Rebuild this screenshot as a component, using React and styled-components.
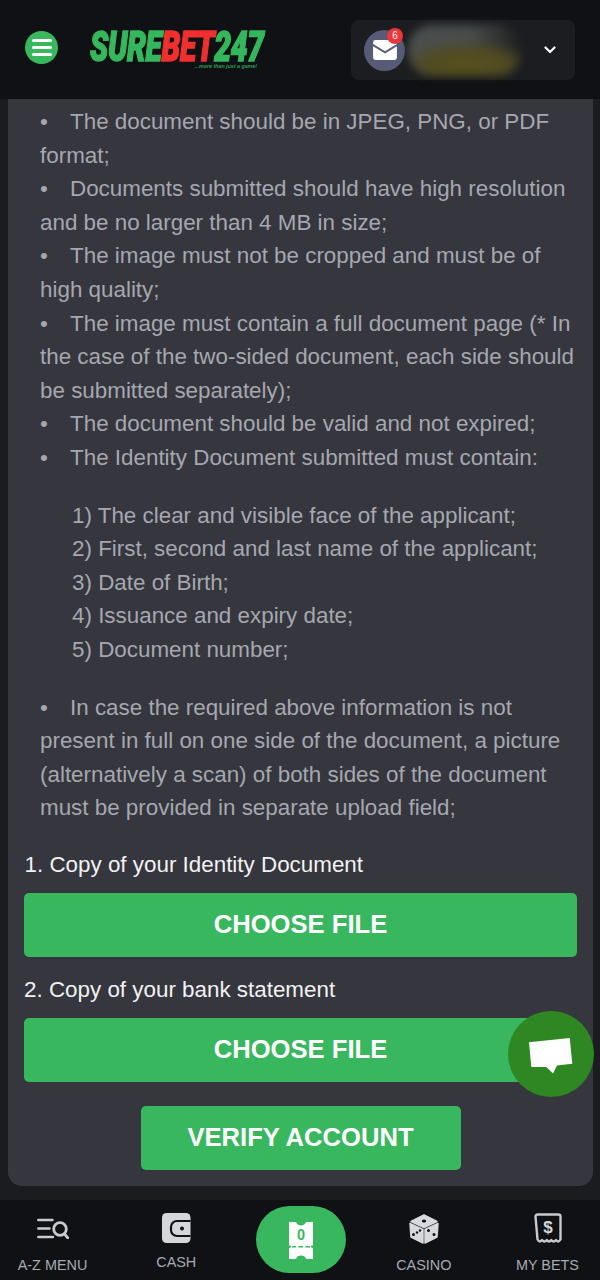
import React from 'react';
import styled, { createGlobalStyle } from 'styled-components';

const GlobalStyle = createGlobalStyle`
  html, body { margin: 0; padding: 0; background: #1b1c20; }
  body { font-family: "Liberation Sans", Arial, sans-serif; }
  * { box-sizing: border-box; }
`;

const Page = styled.div`
  position: relative;
  width: 600px;
  height: 1280px;
  overflow: hidden;
  display: flex;
  flex-direction: column;
  background: #1b1c20;
`;

const Header = styled.header`
  height: 99px;
  flex: none;
  display: flex;
  align-items: center;
  background: #0f1114;
  padding: 0 25px 0 25px;
`;

const MenuButton = styled.button`
  width: 33px;
  height: 33px;
  margin-top: -4px;
  border: 0;
  padding: 0;
  border-radius: 50%;
  background: #39b75f;
  display: flex;
  flex-direction: column;
  align-items: center;
  justify-content: center;
  gap: 4px;
`;

const MenuLine = styled.span`
  width: 20px;
  height: 3px;
  border-radius: 2px;
  background: #fff;
`;

const Logo = styled.div`
  margin-left: 32px;
  margin-top: -1px;
  width: 178px;
  display: flex;
  flex-direction: column;
`;

const LogoWord = styled.div`
  font-family: "Roboto", "Liberation Sans", sans-serif;
  font-weight: 900;
  font-style: italic;
  font-size: 42px;
  line-height: 36px;
  letter-spacing: -0.5px;
  color: #35b75c;
  -webkit-text-stroke: 1.5px currentColor;
  white-space: nowrap;
  transform: scaleX(0.715);
  transform-origin: left center;
`;

const LogoRed = styled.span`
  color: #f0302f;
`;

const LogoTag = styled.div`
  align-self: flex-end;
  margin: -2px 11px 0 0;
  font-size: 5.3px;
  line-height: 6px;
  font-weight: 700;
  font-style: italic;
  color: #2f9e50;
`;

const UserBox = styled.div`
  margin-left: auto;
  width: 224px;
  height: 60px;
  margin-top: 1px;
  border-radius: 8px;
  background: #1b1d20;
  display: flex;
  align-items: center;
  padding-left: 13px;
`;

const MailCircle = styled.div`
  position: relative;
  width: 41px;
  height: 41px;
  flex: none;
  border-radius: 50%;
  background: #565c78;
  display: flex;
  align-items: center;
  justify-content: center;
`;

const Badge = styled.span`
  position: absolute;
  top: -2px;
  right: 2px;
  width: 16px;
  height: 16px;
  border-radius: 50%;
  background: #ef3537;
  color: #fff;
  font-size: 10px;
  line-height: 16px;
  text-align: center;
`;

const Blur = styled.div`
  width: 114px;
  height: 51px;
  flex: none;
  margin-left: 3px;
  border-radius: 24px;
  background:
    radial-gradient(ellipse 62% 48% at 52% 78%, #565020 0%, #514b20 55%, rgba(81, 75, 32, 0) 100%),
    linear-gradient(90deg, #4b4e4e 0%, #494c4b 55%, #2c2e2e 85%, #1b1d20 100%);
  filter: blur(4px);
`;

const Chevron = styled.svg`
  margin-left: auto;
  margin-right: 19px;
  width: 12px;
  height: 8px;
`;

const Panel = styled.main`
  flex: none;
  margin: 0 7px 0 8px;
  height: 1087px;
  border-radius: 0 0 14px 14px;
  background: #35363e;
  padding: 6px 16px 0;
`;

const Rules = styled.div`
  padding: 0 2px 0 16px;
  font-size: 22.4px;
  line-height: 33.6px;
  color: #a5a8ae;
`;

const Rule = styled.div`
  margin: 0;
  &::before {
    content: "•";
    display: inline-block;
    width: 30px;
  }
`;

const SubList = styled.ol`
  list-style: none;
  margin: 24px 0;
  padding: 0 0 0 32px;
`;

const UploadLabel = styled.div`
  margin: ${p => p.$top}px 0 14px ${p => p.$left}px;
  font-size: 22.4px;
  line-height: 28px;
  color: #f2f2f2;
`;

const GreenButton = styled.button`
  display: block;
  width: ${p => p.$width || '553px'};
  height: 64px;
  margin: ${p => p.$margin || '0'};
  padding: 0;
  border: 0;
  border-radius: 5px;
  background: #39b75f;
  color: #fff;
  font-family: inherit;
  font-size: 25.6px;
  font-weight: 700;
`;

const ChatBubble = styled.div`
  position: absolute;
  left: 508px;
  top: 1011px;
  width: 86px;
  height: 86px;
  border-radius: 50%;
  background: #2e8722;
  display: flex;
  align-items: center;
  justify-content: center;
  padding-top: 4px;
`;

const Footer = styled.nav`
  margin-top: 14px;
  flex: 1;
  background: #0f1114;
  display: grid;
  grid-template-columns: repeat(5, 123.75px);
  justify-content: center;
`;

const NavItem = styled.div`
  display: flex;
  flex-direction: column;
  align-items: center;
  justify-content: flex-end;
  padding-bottom: ${p => p.$bottom}px;
  color: #a8abb4;
  font-size: 14.4px;
  line-height: 16px;
  gap: ${p => p.$gap}px;
`;

const BetWrap = styled.div`
  display: flex;
  justify-content: center;
  padding: 6px 0 0 2px;
`;

const BetButton = styled.div`
  width: 90px;
  height: 67px;
  border-radius: 34px;
  background: #39b75f;
  display: flex;
  align-items: center;
  justify-content: center;
  padding-top: 2px;
`;

const SlipCount = styled.text`
  font-family: "Roboto", "Liberation Sans", sans-serif;
  font-size: 14px;
  font-weight: 700;
  fill: #39b75f;
`;

const rules = [
  'The document should be in JPEG, PNG, or PDF format;',
  'Documents submitted should have high resolution and be no larger than 4 MB in size;',
  'The image must not be cropped and must be of high quality;',
  'The image must contain a full document page (* In the case of the two-sided document, each side should be submitted separately);',
  'The document should be valid and not expired;',
  'The Identity Document submitted must contain:',
];

const items = [
  '1) The clear and visible face of the applicant;',
  '2) First, second and last name of the applicant;',
  '3) Date of Birth;',
  '4) Issuance and expiry date;',
  '5) Document number;',
];

function MailIcon() {
  return (
    <svg width="24" height="20" viewBox="0 0 25 21">
      <path fill="#fff" d="M2.5 0h20A2.5 2.5 0 0 1 25 2.5v1.6l-12.5 7.6L0 4.1V2.5A2.5 2.5 0 0 1 2.5 0z" />
      <path fill="#fff" d="M0 6.6l12.5 7.6L25 6.6v11.9a2.5 2.5 0 0 1-2.5 2.5h-20A2.5 2.5 0 0 1 0 18.500z" />
    </svg>
  );
}

function AzIcon() {
  return (
    <svg width="32" height="21" viewBox="0 0 32 21" fill="none" stroke="#c8cad1" strokeLinecap="round">
      <path strokeWidth="2.700" d="M1.400 2h14M1.400 10.500h11M1.400 19h14.500" />
      <circle cx="23" cy="11" r="6.300" strokeWidth="2.800" />
      <path strokeWidth="2.800" d="M27.500 16l3.300 3.800" />
    </svg>
  );
}

function CashIcon() {
  return (
    <svg width="29" height="30" viewBox="0 0 29 30">
      <rect width="28.500" height="30" rx="4.500" fill="#d5d6dc" />
      <path fill="none" stroke="#0f1114" strokeWidth="2.200" d="M28.500 8H15a6 6 0 0 0-6 6v3a6 6 0 0 0 6 6h13.500" />
      <circle cx="20" cy="15.500" r="2" fill="#0f1114" />
    </svg>
  );
}

function SlipIcon() {
  return (
    <svg width="24" height="37" viewBox="0 0 24 37">
      <path fill="#fff" d="M0 0h7c.8 2.400 2.500 3.400 5 3.400s4.200-1 5-3.400h7v23.500h-1.500c-.8 0-1 2.500 1.500 2.500v11h-7c-.8-2.400-2.500-3.400-5-3.400s-4.200 1-5 3.400H0V26c2.500 0 2.300-2.500 1.500-2.500H0z" />
      <path fill="#39b75f" d="M3 24h4v1.600H3zM9.500 24h4.500v1.600H9.500zM16.500 24h4.500v1.600h-4.500z" />
      <SlipCount x="12" y="18" textAnchor="middle">0</SlipCount>
    </svg>
  );
}

function DiceIcon() {
  return (
    <svg width="30" height="30" viewBox="0 0 30 30">
      <g fill="#d8d9df" stroke="#d8d9df" strokeWidth="1.500" strokeLinejoin="round">
        <path d="M15 1l13 6.500L15 13.500 2 7.500z" />
        <path d="M1 9.500l13 6v13.500L2 23z" />
        <path d="M29 9.500l-13 6v13.500l12-6z" />
      </g>
      <g fill="#111316">
        <ellipse cx="15" cy="7" rx="2.200" ry="1.500" />
        <circle cx="4.500" cy="20.500" r="1.500" />
        <circle cx="8" cy="18.500" r="1.200" />
        <circle cx="11" cy="16.500" r="1.200" />
        <circle cx="19.500" cy="16.500" r="1.500" />
        <circle cx="25" cy="20.500" r="1.500" />
      </g>
    </svg>
  );
}

function BetsIcon() {
  return (
    <svg width="30" height="31" viewBox="0 0 30 31" fill="none">
      <path stroke="#c8cad0" strokeWidth="2.400" strokeLinejoin="round" d="M2.500 3.500a2 2 0 0 1 2-2h21a2 2 0 0 1 2 2v23c-1.500 2.500-3 2.500-4.500.6-1.600 1.900-3.200 1.900-4.800 0-1.500 1.900-2.900 1.900-4.400 0-1.600 1.900-3.200 1.900-4.800 0-1.500 1.900-3 1.900-4.500-.6z" />
      <text x="15" y="20" textAnchor="middle" fontFamily="Liberation Sans" fontWeight="700" fontSize="17" fill="#d5d6dc">$</text>
    </svg>
  );
}

export default function App() {
  return (
    <Page>
      <GlobalStyle />
      <Header>
        <MenuButton aria-label="Menu">
          <MenuLine />
          <MenuLine />
          <MenuLine />
        </MenuButton>
        <Logo>
          <LogoWord>SURE<LogoRed>BET</LogoRed>247</LogoWord>
          <LogoTag>...more than just a game!</LogoTag>
        </Logo>
        <UserBox>
          <MailCircle>
            <MailIcon />
            <Badge>6</Badge>
          </MailCircle>
          <Blur />
          <Chevron viewBox="0 0 12 8" fill="none" stroke="#fff" strokeWidth="2.200" strokeLinecap="round" strokeLinejoin="round">
            <path d="M1.500 1.500L6 6l4.500-4.500" />
          </Chevron>
        </UserBox>
      </Header>
      <Panel>
        <Rules>
          {rules.map(r => (
            <Rule key={r}>{r}</Rule>
          ))}
          <SubList>
            {items.map(i => <li key={i}>{i}</li>)}
          </SubList>
          <Rule>In case the required above information is not present in full on one side of the document, a picture (alternatively a scan) of both sides of the document must be provided in separate upload field;</Rule>
        </Rules>
        <UploadLabel $top={26} $left={0.5}>1. Copy of your Identity Document</UploadLabel>
        <GreenButton>CHOOSE FILE</GreenButton>
        <UploadLabel $top={19} $left={0}>2. Copy of your bank statement</UploadLabel>
        <GreenButton>CHOOSE FILE</GreenButton>
        <GreenButton $width="320px" $margin="24px auto 0">VERIFY ACCOUNT</GreenButton>
      </Panel>
      <ChatBubble>
        <svg width="44" height="36" viewBox="0 0 44 36">
          <path fill="#fff" d="M0 4.300L40.700 0l2.600 25.700L28 27.600 24 35.600 17.300 29 2.300 29z" />
        </svg>
      </ChatBubble>
      <Footer>
        <NavItem $bottom={7} $gap={18}><AzIcon />A-Z MENU</NavItem>
        <NavItem $bottom={10} $gap={11}><CashIcon />CASH</NavItem>
        <BetWrap>
          <BetButton><SlipIcon /></BetButton>
        </BetWrap>
        <NavItem $bottom={7} $gap={13}><DiceIcon />CASINO</NavItem>
        <NavItem $bottom={7} $gap={13}><BetsIcon />MY BETS</NavItem>
      </Footer>
    </Page>
  );
}
